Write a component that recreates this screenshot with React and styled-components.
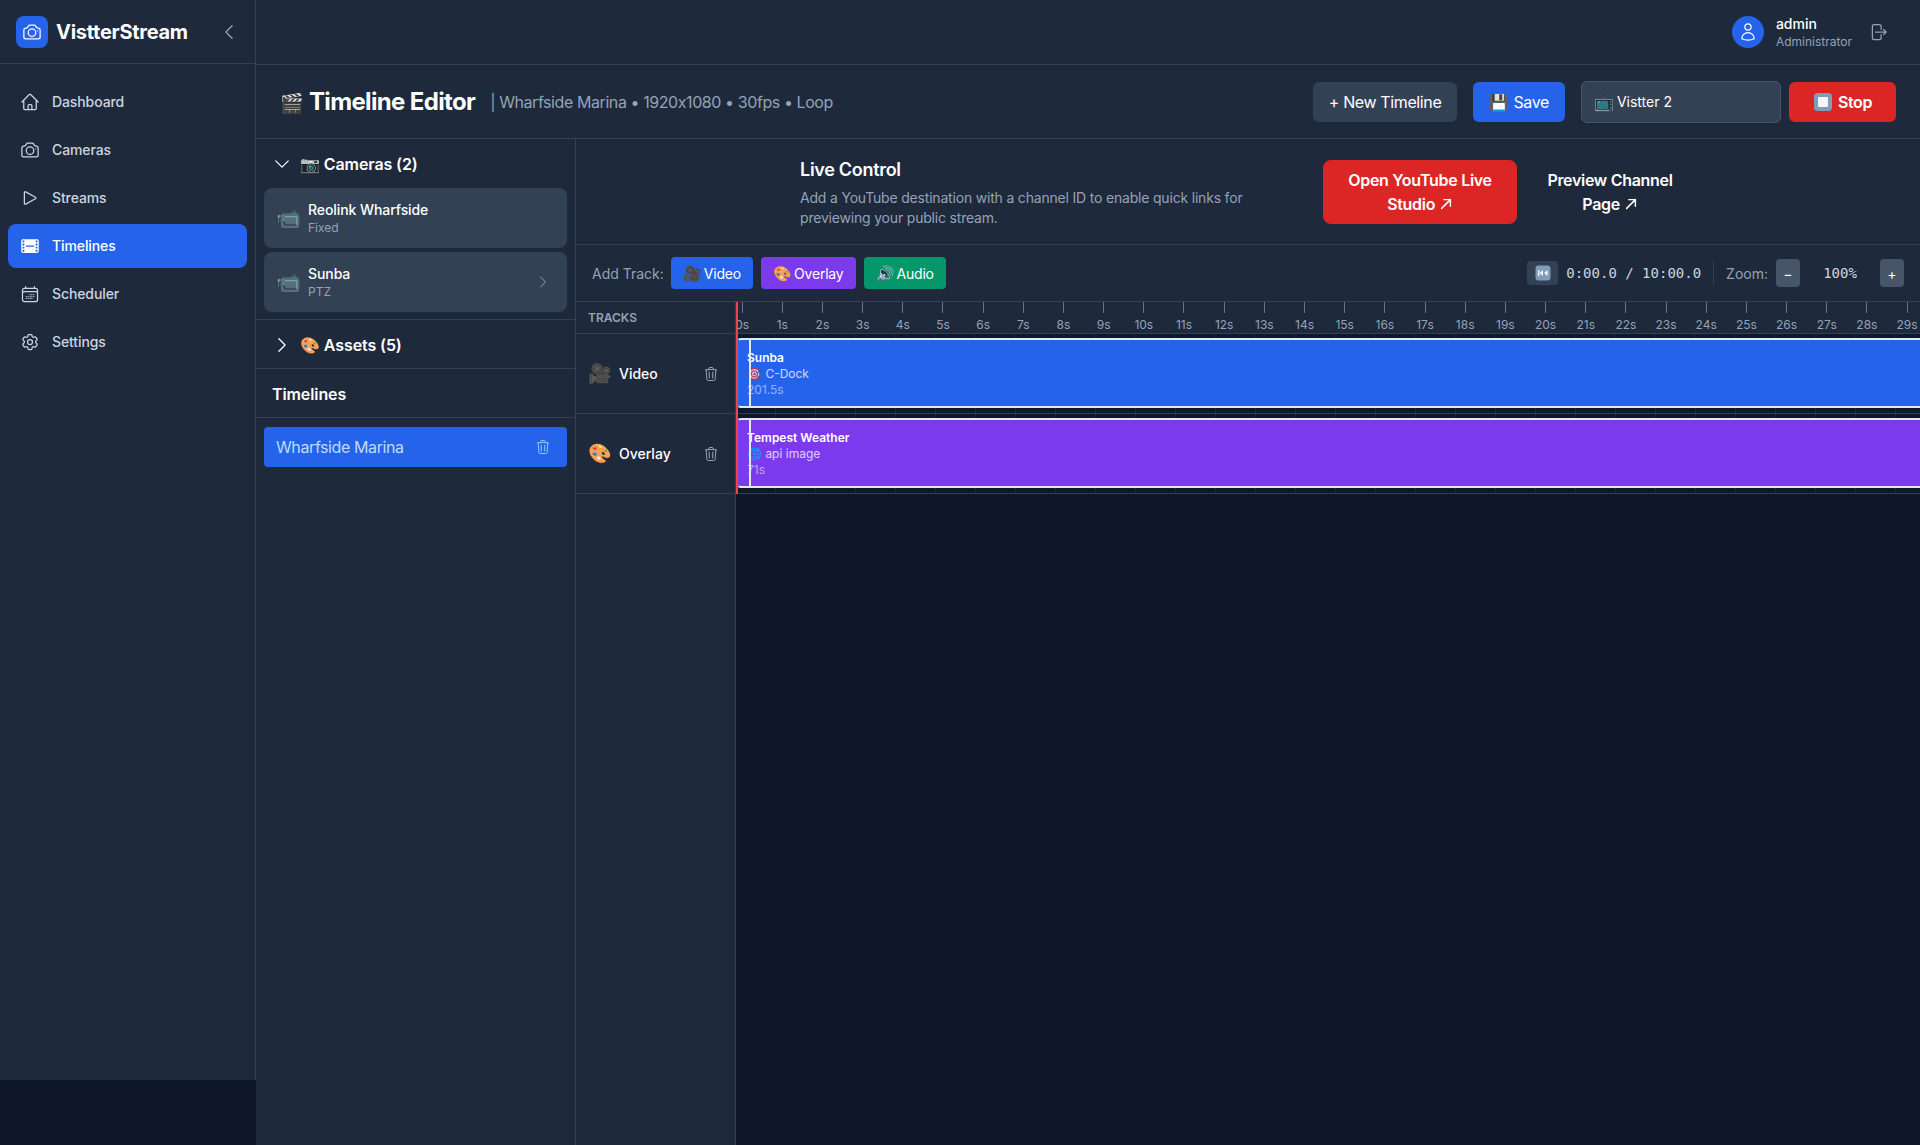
import React from 'react'
import styled, { createGlobalStyle } from 'styled-components'
import {
  HiOutlineHome, HiOutlineCamera, HiOutlinePlay, HiFilm, HiOutlineCalendarDays, HiOutlineCog6Tooth,
  HiOutlineChevronLeft, HiOutlineChevronRight, HiOutlineChevronDown, HiOutlineUser,
  HiOutlineArrowRightOnRectangle, HiOutlineTrash, HiOutlineArrowUpRight,
} from 'react-icons/hi2'

const color = {
  page: '#0f172a',
  panel: '#1e293b',
  raised: '#334155',
  line: '#334155',
  muted: '#94a3b8',
  blue: '#2563eb',
  purple: '#7c3aed',
  green: '#059669',
  red: '#dc2626',
}

const TICK = 40.18

const GlobalStyle = createGlobalStyle`
  html, body { margin: 0; padding: 0; background: ${color.page}; }
  body { font-family: Inter, "Noto Sans", sans-serif; color: #fff; overflow: hidden; }
  * { box-sizing: border-box; }
`

const Shell = styled.div`
  display: flex;
  width: 1920px;
  height: 1145px;
  overflow: hidden;
`
const Sidebar = styled.aside`
  flex: 0 0 256px;
  height: 1080px;
  background: ${color.panel};
  border-right: 1px solid ${color.line};
`
const Brand = styled.div`
  height: 64px;
  display: flex;
  align-items: center;
  padding: 0 16px;
  border-bottom: 1px solid ${color.line};
`
const LogoBox = styled.div`
  width: 32px;
  height: 32px;
  border-radius: 8px;
  background: ${color.blue};
  display: flex;
  align-items: center;
  justify-content: center;
  font-size: 20px;
`
const BrandName = styled.span`
  margin-left: 8px;
  font-size: 20px;
  font-weight: 700;
  letter-spacing: -0.28px;
  flex: 1;
`
const Collapse = styled.span`
  display: flex;
  color: ${color.muted};
  font-size: 20px;
`
const Nav = styled.nav`
  display: flex;
  flex-direction: column;
  gap: 4px;
  padding: 16px 8px;
`
const NavItem = styled.a`
  height: 44px;
  display: flex;
  align-items: center;
  gap: 12px;
  padding: 0 12px 1px;
  border-radius: 8px;
  font-size: 14px;
  font-weight: 500;
  letter-spacing: -0.1px;
  color: ${p => (p.$active ? '#fff' : '#cbd5e1')};
  background: ${p => (p.$active ? color.blue : 'transparent')};
  svg { font-size: 20px; flex: none; }
`
const Main = styled.main`
  flex: 1;
  min-width: 0;
  height: 1145px;
  display: flex;
  flex-direction: column;
  background: ${color.panel};
`
const TopBar = styled.header`
  flex: 0 0 65px;
  display: flex;
  align-items: center;
  justify-content: flex-end;
  padding-right: 24px;
  border-bottom: 1px solid ${color.line};
`
const Avatar = styled.div`
  width: 32px;
  height: 32px;
  border-radius: 50%;
  background: ${color.blue};
  display: flex;
  align-items: center;
  justify-content: center;
  font-size: 20px;
`
const UserText = styled.div`
  margin-left: 12px;
  display: flex;
  flex-direction: column;
`
const UserName = styled.span`
  font-size: 14px;
  font-weight: 500;
  line-height: 20px;
`
const UserRole = styled.span`
  font-size: 12px;
  line-height: 16px;
  color: ${color.muted};
`
const LogoutIcon = styled.span`
  display: flex;
  margin-left: 16px;
  padding-right: 8px;
  font-size: 20px;
  color: ${color.muted};
`
const EditorBar = styled.div`
  flex: 0 0 74px;
  display: flex;
  align-items: center;
  padding: 0 24px;
  border-bottom: 1px solid ${color.line};
`
const Title = styled.h1`
  margin: 2px 0 0;
  font-size: 24px;
  font-weight: 700;
  line-height: 32px;
  letter-spacing: -0.65px;
`
const Emoji = styled.span`
  font-size: ${p => p.$size}px;
  margin-right: ${p => p.$right || 0}px;
  letter-spacing: 0;
`
const Subtitle = styled.span`
  margin-left: 15px;
  font-size: 16px;
  letter-spacing: -0.42px;
  color: ${color.muted};
  flex: 1;
`
const BarButton = styled.button`
  height: 40px;
  border: 0;
  border-radius: 6px;
  padding: 0 ${p => p.$pad || 16}px;
  display: flex;
  align-items: center;
  font: ${p => (p.$bold ? 600 : 400)} 16px Inter, sans-serif;
  letter-spacing: -0.38px;
  color: #fff;
  background: ${p => p.$bg};
  margin-left: ${p => p.$gap || 0}px;
  svg { margin-right: 5px; }
`
const ChannelSelect = styled.div`
  width: 200px;
  height: 42px;
  margin-left: 16px;
  padding: 0 12px;
  display: flex;
  align-items: center;
  font-size: 14px;
  background: ${color.raised};
  border: 1px solid #475569;
  border-radius: 6px;
`
const EditorBody = styled.div`
  flex: 1;
  min-height: 0;
  display: flex;
`
const LeftPanel = styled.div`
  flex: 0 0 320px;
  border-right: 1px solid ${color.line};
`
const PanelSection = styled.section`
  border-bottom: 1px solid ${color.line};
`
const SectionHead = styled.div`
  height: 48px;
  display: flex;
  align-items: center;
  padding: 1px 16px 0;
  gap: 8px;
  font-size: 16px;
  font-weight: 600;
  letter-spacing: -0.1px;
  svg { font-size: 20px; flex: none; }
`
const CardList = styled.div`
  display: flex;
  flex-direction: column;
  gap: 4px;
  padding: 1px 8px 7px;
`
const CameraCard = styled.div`
  height: 60px;
  display: flex;
  align-items: center;
  gap: 7px;
  padding: 0 12px;
  border-radius: 8px;
  background: ${color.raised};
  svg { margin-left: auto; margin-right: 4px; font-size: 16px; color: ${color.muted}; }
`
const CardName = styled.div`
  font-size: 14px;
  font-weight: 500;
  line-height: 20px;
  letter-spacing: -0.08px;
`
const CardSub = styled.div`
  font-size: 12px;
  line-height: 16px;
  color: ${color.muted};
`
const TimelineList = styled.div`
  padding: 9px 8px;
`
const TimelineRow = styled.div`
  height: 40px;
  display: flex;
  align-items: center;
  justify-content: space-between;
  padding: 0 16px 0 12px;
  border-radius: 4px;
  font-size: 16px;
  letter-spacing: -0.4px;
  background: ${color.blue};
  color: #bfdbfe;
  svg { font-size: 16px; color: #93c5fd; }
`
const RightColumn = styled.div`
  flex: 1;
  min-width: 0;
  display: flex;
  flex-direction: column;
`
const LiveControl = styled.div`
  flex: 0 0 106px;
  display: flex;
  align-items: center;
  padding-left: 224px;
  border-bottom: 1px solid ${color.line};
`
const LiveText = styled.div`
  width: 523px;
  padding-top: 1px;
`
const LiveTitle = styled.h2`
  margin: 0 0 4px;
  font-size: 18px;
  font-weight: 600;
  line-height: 28px;
  letter-spacing: -0.3px;
`
const LiveCopy = styled.p`
  margin: 0;
  width: 460px;
  font-size: 14px;
  line-height: 20px;
  letter-spacing: -0.19px;
  color: ${color.muted};
`
const LiveLink = styled.a`
  width: ${p => p.$w}px;
  height: 64px;
  margin-left: ${p => p.$gap || 0}px;
  border-radius: 8px;
  display: flex;
  align-items: center;
  justify-content: center;
  text-align: center;
  font-size: 16px;
  font-weight: 600;
  line-height: 24px;
  letter-spacing: -0.3px;
  background: ${p => p.$bg || 'transparent'};
  svg { font-size: 14px; vertical-align: -1px; stroke-width: 2.5; }
`
const Toolbar = styled.div`
  flex: 0 0 57px;
  display: flex;
  align-items: center;
  gap: 8px;
  padding: 0 16px;
  border-bottom: 1px solid ${color.line};
`
const ToolLabel = styled.span`
  font-size: 14px;
  color: ${color.muted};
  margin-right: ${p => p.$right || 0}px;
`
const AddButton = styled.button`
  height: 32px;
  padding: 0 12px;
  border: 0;
  border-radius: 4px;
  font: 400 14px Inter, sans-serif;
  letter-spacing: -0.2px;
  color: #fff;
  background: ${p => p.$bg};
`
const Spacer = styled.div`
  flex: 1;
`
const RewindButton = styled.span`
  width: 31px;
  height: 24px;
  border-radius: 4px;
  background: ${color.raised};
  display: flex;
  align-items: center;
  justify-content: center;
`
const Mono = styled.span`
  font-family: "DejaVu Sans Mono", "Liberation Mono", monospace;
  font-size: 14px;
  color: #cbd5e1;
`
const Divider = styled.span`
  width: 1px;
  height: 24px;
  margin: 0 4px;
  background: ${color.line};
`
const ZoomButton = styled.span`
  width: 24px;
  height: 28px;
  border-radius: 4px;
  background: #475569;
  display: flex;
  align-items: center;
  justify-content: center;
  font-size: 14px;
`
const ZoomValue = styled(Mono)`
  width: 64px;
  text-align: center;
`
const TimelineArea = styled.div`
  flex: 1;
  min-height: 0;
  display: flex;
`
const TrackColumn = styled.div`
  flex: 0 0 160px;
  border-right: 1px solid ${color.line};
`
const TracksHead = styled.div`
  height: 32px;
  padding: 0 12px;
  display: flex;
  align-items: center;
  font-size: 12px;
  font-weight: 600;
  color: ${color.muted};
  border-bottom: 1px solid ${color.line};
`
const TrackRow = styled.div`
  height: 80px;
  padding: 0 16px 0 12px;
  display: flex;
  align-items: center;
  gap: 7px;
  font-size: 14px;
  font-weight: 500;
  border-bottom: 1px solid ${color.line};
  svg { margin-left: auto; font-size: 16px; color: ${color.muted}; }
`
const Canvas = styled.div`
  position: relative;
  flex: 1;
  min-width: 0;
  overflow: hidden;
  background: ${color.page};
`
const RulerWrap = styled.div`
  overflow: hidden;
  background: ${color.panel};
  border-bottom: 1px solid ${color.line};
`
const Ruler = styled.div`
  height: 31px;
  display: flex;
  margin-left: -14px;
`
const RulerCell = styled.div`
  flex: 0 0 ${TICK}px;
  display: flex;
  flex-direction: column;
  align-items: center;
  font-size: 12px;
  line-height: 16px;
  color: ${color.muted};
  &::before {
    content: '';
    width: 1px;
    height: 12px;
    margin-bottom: 4px;
    background: #64748b;
  }
`
const Lane = styled.div`
  height: 80px;
  padding: 4px 0 0 1px;
  border-bottom: 1px solid ${color.line};
  background: repeating-linear-gradient(90deg, transparent 0 39px, ${color.panel} 39px 40px);
`
const Clip = styled.div`
  position: relative;
  height: 70px;
  padding: 10px 8px;
  border: 2px solid #e2e8f0;
  border-left-color: transparent;
  border-right: 0;
  border-radius: 4px 0 0 4px;
  background: ${p => p.$bg};
  font-size: 12px;
  line-height: 16px;
  &::after {
    content: '';
    position: absolute;
    left: 10px;
    top: 0;
    bottom: 0;
    width: 2px;
    background: #e2e8f0;
  }
`
const ClipName = styled.div`
  font-weight: 600;
`
const ClipSub = styled.div`
  opacity: 0.75;
`
const ClipTime = styled.div`
  opacity: 0.5;
`
const Playhead = styled.div`
  position: absolute;
  left: 0;
  top: 0;
  width: 2px;
  height: 192px;
  background: #ef4444;
`

const navItems = [
  { label: 'Dashboard', Icon: HiOutlineHome },
  { label: 'Cameras', Icon: HiOutlineCamera },
  { label: 'Streams', Icon: HiOutlinePlay },
  { label: 'Timelines', Icon: HiFilm, active: true },
  { label: 'Scheduler', Icon: HiOutlineCalendarDays },
  { label: 'Settings', Icon: HiOutlineCog6Tooth },
]

// keycap tile behind the stop / rewind glyphs, grey-blue like the reference
const StopGlyph = () => (
  <svg width="20" height="20" viewBox="0 0 20 20">
    <rect x="1" y="1" width="18" height="18" rx="3.5" fill="#7f9cb8" />
    <rect x="5" y="5" width="10" height="10" rx="1" fill="#f4f7fa" />
  </svg>
)

const RewindGlyph = () => (
  <svg width="16" height="16" viewBox="0 0 16 16">
    <rect x="0.5" y="0.5" width="15" height="15" rx="3" fill="#7f9cb8" />
    <rect x="3" y="5" width="1.4" height="6" fill="#f4f7fa" />
    <path d="M8 5v6L4.6 8zM12.6 5v6L9.2 8z" fill="#f4f7fa" />
  </svg>
)

export default function App() {
  const seconds = Array.from({ length: 30 }, (_, i) => i)
  return (
    <Shell>
      <GlobalStyle />
      <Sidebar>
        <Brand>
          <LogoBox><HiOutlineCamera /></LogoBox>
          <BrandName>VistterStream</BrandName>
          <Collapse><HiOutlineChevronLeft /></Collapse>
        </Brand>
        <Nav>
          {navItems.map(({ label, Icon, active }) => (
            <NavItem key={label} $active={active}><Icon />{label}</NavItem>
          ))}
        </Nav>
      </Sidebar>
      <Main>
        <TopBar>
          <Avatar><HiOutlineUser /></Avatar>
          <UserText>
            <UserName>admin</UserName>
            <UserRole>Administrator</UserRole>
          </UserText>
          <LogoutIcon><HiOutlineArrowRightOnRectangle /></LogoutIcon>
        </TopBar>
        <EditorBar>
          <Title><Emoji $size={19} $right={5}>🎬</Emoji>Timeline Editor</Title>
          <Subtitle>| Wharfside Marina • 1920x1080 • 30fps • Loop</Subtitle>
          <BarButton $bg={color.raised}>+ New Timeline</BarButton>
          <BarButton $bg={color.blue} $gap={16}><Emoji $size={16} $right={4}>💾</Emoji>Save</BarButton>
          <ChannelSelect><Emoji $size={16} $right={3}>📺</Emoji>Vistter 2</ChannelSelect>
          <BarButton $bg={color.red} $gap={8} $pad={24} $bold><StopGlyph />Stop</BarButton>
        </EditorBar>
        <EditorBody>
          <LeftPanel>
            <PanelSection>
              <SectionHead><HiOutlineChevronDown />📷 Cameras (2)</SectionHead>
              <CardList>
                <CameraCard>
                  <Emoji $size={20}>📹</Emoji>
                  <div><CardName>Reolink Wharfside</CardName><CardSub>Fixed</CardSub></div>
                </CameraCard>
                <CameraCard>
                  <Emoji $size={20}>📹</Emoji>
                  <div><CardName>Sunba</CardName><CardSub>PTZ</CardSub></div>
                  <HiOutlineChevronRight />
                </CameraCard>
              </CardList>
            </PanelSection>
            <PanelSection>
              <SectionHead><HiOutlineChevronRight />🎨 Assets (5)</SectionHead>
            </PanelSection>
            <PanelSection>
              <SectionHead>Timelines</SectionHead>
            </PanelSection>
            <TimelineList>
              <TimelineRow>Wharfside Marina<HiOutlineTrash /></TimelineRow>
            </TimelineList>
          </LeftPanel>
          <RightColumn>
            <LiveControl>
              <LiveText>
                <LiveTitle>Live Control</LiveTitle>
                <LiveCopy>Add a YouTube destination with a channel ID to enable quick links for previewing your public stream.</LiveCopy>
              </LiveText>
              <LiveLink $w={194} $bg={color.red}>
                <span>Open YouTube Live Studio <HiOutlineArrowUpRight /></span>
              </LiveLink>
              <LiveLink $w={150} $gap={18}>
                <span>Preview Channel Page <HiOutlineArrowUpRight /></span>
              </LiveLink>
            </LiveControl>
            <Toolbar>
              <ToolLabel $right={-1}>Add Track:</ToolLabel>
              <AddButton $bg={color.blue}><Emoji $size={15} $right={2}>🎥</Emoji>Video</AddButton>
              <AddButton $bg={color.purple}><Emoji $size={15} $right={2}>🎨</Emoji>Overlay</AddButton>
              <AddButton $bg={color.green}><Emoji $size={15} $right={2}>🔊</Emoji>Audio</AddButton>
              <Spacer />
              <RewindButton><RewindGlyph /></RewindButton>
              <Mono>0:00.0 / 10:00.0</Mono>
              <Divider />
              <ToolLabel>Zoom:</ToolLabel>
              <ZoomButton>−</ZoomButton>
              <ZoomValue>100%</ZoomValue>
              <ZoomButton>+</ZoomButton>
            </Toolbar>
            <TimelineArea>
              <TrackColumn>
                <TracksHead>TRACKS</TracksHead>
                <TrackRow><Emoji $size={19}>🎥</Emoji>Video<HiOutlineTrash /></TrackRow>
                <TrackRow><Emoji $size={19}>🎨</Emoji>Overlay<HiOutlineTrash /></TrackRow>
              </TrackColumn>
              <Canvas>
                <RulerWrap>
                  <Ruler>
                    {seconds.map(s => <RulerCell key={s}>{s}s</RulerCell>)}
                  </Ruler>
                </RulerWrap>
                <Lane>
                  <Clip $bg={color.blue}>
                    <ClipName>Sunba</ClipName>
                    <ClipSub>🎯 C-Dock</ClipSub>
                    <ClipTime>201.5s</ClipTime>
                  </Clip>
                </Lane>
                <Lane>
                  <Clip $bg={color.purple}>
                    <ClipName>Tempest Weather</ClipName>
                    <ClipSub>🌐 api image</ClipSub>
                    <ClipTime>71s</ClipTime>
                  </Clip>
                </Lane>
                <Playhead />
              </Canvas>
            </TimelineArea>
          </RightColumn>
        </EditorBody>
      </Main>
    </Shell>
  )
}
